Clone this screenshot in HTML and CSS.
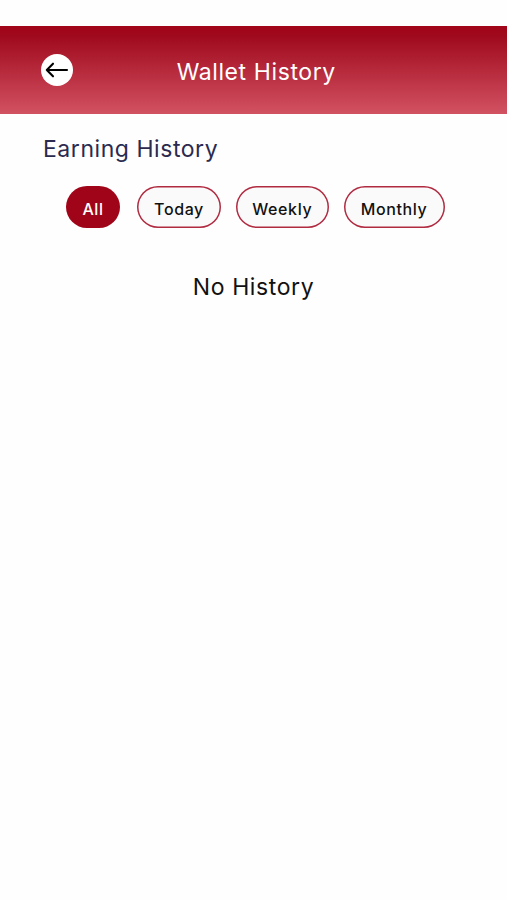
FILE: index.html
```html
<!DOCTYPE html>
<html lang="en">
<head>
    <meta charset="UTF-8">
    <meta name="viewport" content="width=device-width, initial-scale=1.0">
    <title>Wallet History</title>
    <link rel="stylesheet" href="styles.css">
</head>
<body>

    <header class="header">
        <button class="back-btn" aria-label="Back">
            <svg width="24" height="16" viewBox="0 0 24 16">
                <path d="M22 8H1.800M8 1.700L1.800 8L8 14.300" fill="none" stroke="#000" stroke-width="2.100" stroke-linecap="round" stroke-linejoin="round"/>
            </svg>
        </button>
        <h1>Wallet History</h1>
    </header>

    <main>
        <h2>Earning History</h2>

        <div class="filters">
            <button class="filter all active">All</button>
            <button class="filter today">Today</button>
            <button class="filter weekly">Weekly</button>
            <button class="filter monthly">Monthly</button>
        </div>

        <p class="empty">No History</p>
    </main>

</body>
</html>
```
FILE: styles.css
```css
* {
    margin: 0;
    padding: 0;
    box-sizing: border-box;
}
body {
    font-family: Inter, 'Liberation Sans', sans-serif;
    background-color: #fefefe;
    min-height: 100vh;
    padding-top: 25.5px;
}
.header {
    height: 88.5px;
    padding: 0 37px 0 40.5px;
    background: linear-gradient(#a00418, #a00a1e 12%, #d25262);
    display: grid;
    grid-template-columns: 32.5px 1fr 32.5px;
    align-items: center;
}
.back-btn {
    width: 32.5px;
    height: 32.5px;
    border: none;
    border-radius: 50%;
    background-color: #fff;
    display: flex;
    align-items: center;
    justify-content: center;
    cursor: pointer;
}
h1 {
    color: #fff;
    font-size: 23px;
    font-weight: 400;
    letter-spacing: 0.6px;
    line-height: 28px;
    text-align: center;
    padding: 5px 0 0 2px;
}
h2 {
    color: #2b2b50;
    font-size: 23px;
    font-weight: 400;
    letter-spacing: 0.55px;
    line-height: 28px;
    padding: 21px 43px 0;
}
.filters {
    display: flex;
    padding: 22.5px 0 0 66px;
}
.filter {
    height: 42.5px;
    border: none;
    border-radius: 22px;
    box-shadow: inset 0 0 0 1.5px #b02a40;
    background-color: #fafafa;
    color: #111;
    font-family: inherit;
    font-size: 16px;
    font-weight: 500;
    letter-spacing: 0.6px;
    padding-top: 4px;
    cursor: pointer;
}
.filter.active {
    background-color: #a00418;
    box-shadow: none;
    color: #fff;
}
.all {
    width: 54px;
    margin-right: 17px;
}
.today {
    width: 84px;
    margin-right: 14.5px;
}
.weekly {
    width: 93.5px;
    margin-right: 14.5px;
}
.monthly {
    width: 101px;
}
.empty {
    color: #111;
    font-size: 23px;
    letter-spacing: 0.6px;
    line-height: 28px;
    text-align: center;
    margin-top: 44.5px;
}
```
